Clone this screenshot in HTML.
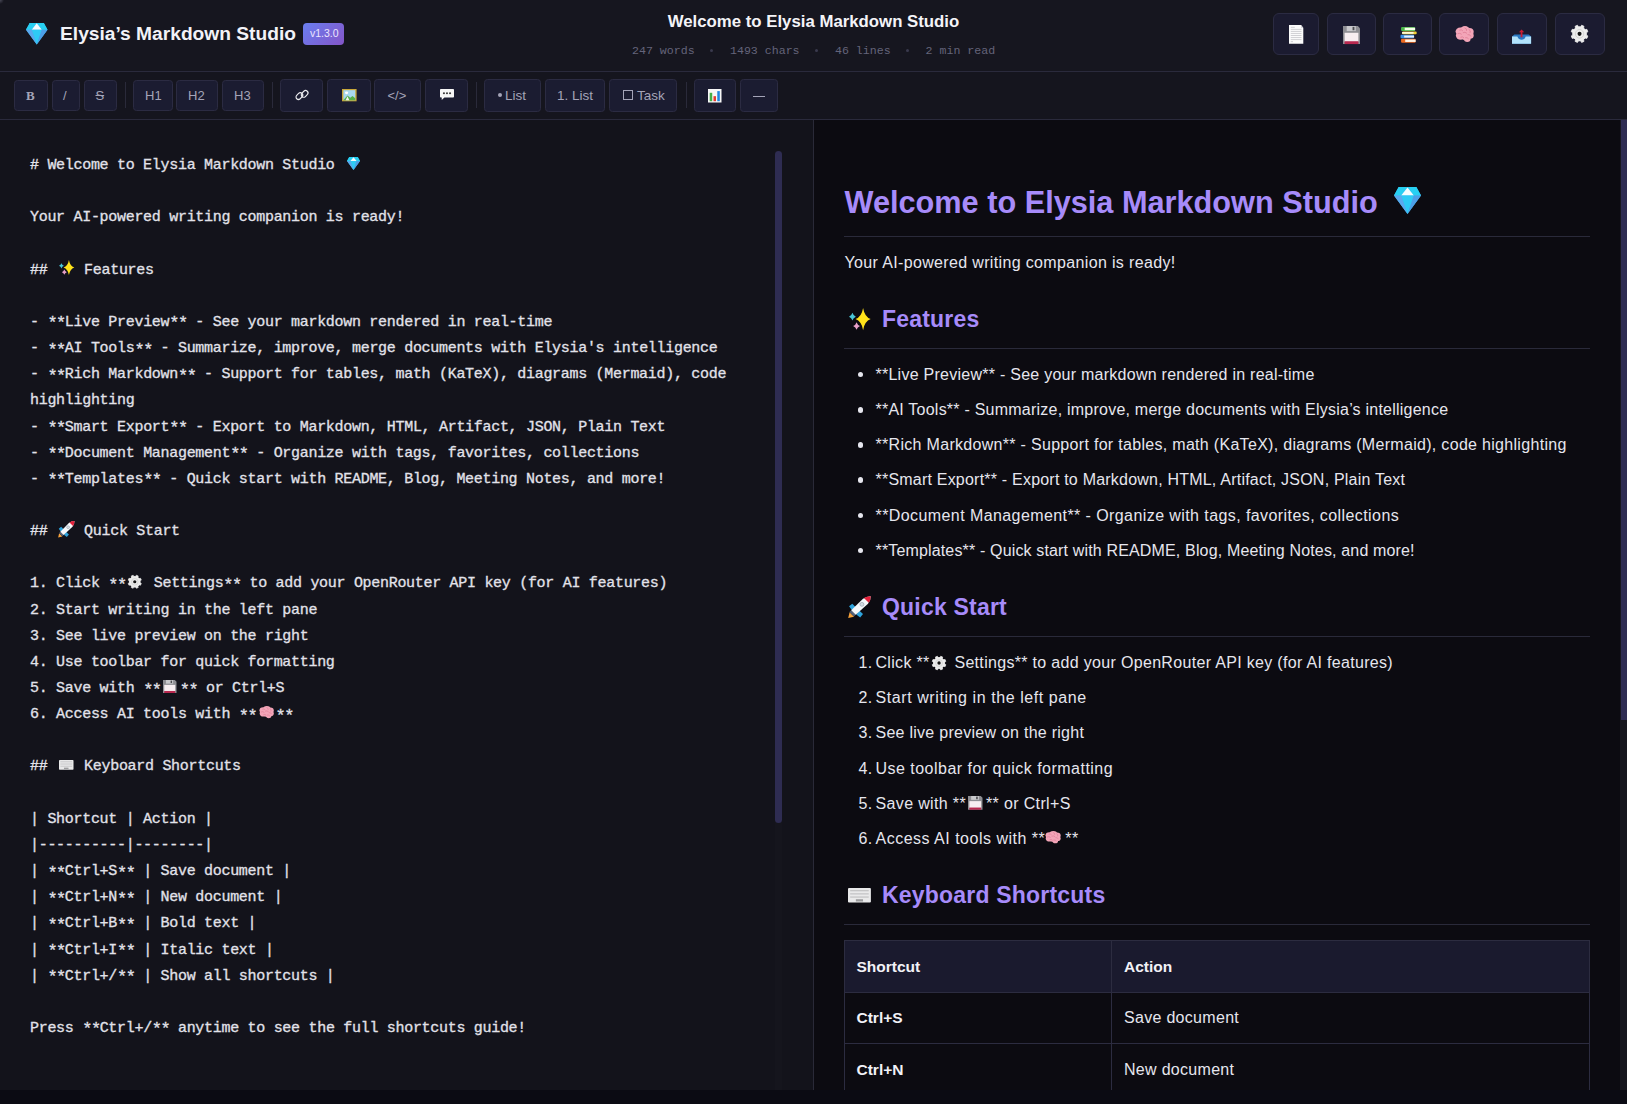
<!DOCTYPE html>
<html><head><meta charset="utf-8"><style>
*{box-sizing:border-box;margin:0;padding:0}
html,body{width:1627px;height:1104px;overflow:hidden;background:#0b0b12;font-family:"Liberation Sans",sans-serif;position:relative}
.t{position:absolute;white-space:pre}
.ic{position:absolute;overflow:visible}
.bg{position:absolute}
.mono{font-family:"Liberation Mono",monospace}
.hb{position:absolute;top:13px;height:42px;background:#1b1b30;border:1px solid #2b2b42;border-radius:6px}
.btn{position:absolute;background:#1b1c31;border:1px solid #2b2b42;border-radius:3.5px}
.sep{position:absolute;top:82px;width:1px;height:26px;background:#2a2a3a}
.ed{color:#e2e2ea;letter-spacing:-0.3px;-webkit-text-stroke:0.3px #e2e2ea}
.ast{position:relative;top:2.5px;font-size:17px;letter-spacing:-1.5px;line-height:0}
.em{display:inline-block;width:19.3px}
.pv{color:#e6e6ee;letter-spacing:0.3px}
.h{color:#a78bfa;font-weight:bold}
.tbt{color:#a4a4b8}
</style></head><body>
<div class="bg" style="left:0;top:0;width:1627px;height:71px;background:#16161f"></div>
<div class="bg" style="left:0;top:0;width:4px;height:4px;background:radial-gradient(circle at 0 0,#4a4a58,rgba(22,22,31,0) 4px)"></div>
<div class="bg" style="left:0;top:71px;width:1627px;height:1px;background:#2a2a3c"></div>
<div class="bg" style="left:0;top:72px;width:1627px;height:47px;background:#15151e"></div>
<div class="bg" style="left:0;top:119px;width:1627px;height:1px;background:#2a2a3c"></div>
<div class="bg" style="left:0;top:120px;width:813px;height:970px;background:#13131b"></div>
<div class="bg" style="left:813px;top:120px;width:1px;height:970px;background:#2a2a38"></div>
<div class="bg" style="left:814px;top:120px;width:806px;height:970px;background:#0c0b11"></div>
<div class="bg" style="left:1620px;top:120px;width:7px;height:970px;background:#16161e"></div>
<div class="bg" style="left:1621px;top:120px;width:6px;height:600px;background:#2e2c52"></div>
<div class="bg" style="left:775px;top:151px;width:7px;height:939px;background:#15151d"></div>
<div class="bg" style="left:775px;top:151px;width:7px;height:672px;border-radius:3.5px;background:#2e2c52"></div>
<div class="bg" style="left:0;top:1090px;width:1627px;height:14px;background:#0b0b13"></div>
<svg class="ic" style="left:26px;top:23px;width:21.5px;height:21.5px;" viewBox="0 0 32 32" preserveAspectRatio="none"><path d="M5.5 0H26.5L32 10L16 32L0 10Z" fill="#3ab7f0"/>
<path d="M5.5 0H16L8.5 10H0Z" fill="#27d0f2"/><path d="M16 0H26.5L32 10H23.5Z" fill="#27d0f2"/>
<path d="M16 .5L8.5 10H23.5Z" fill="#f4fdff"/>
<path d="M8.5 10H23.5L16 32Z" fill="#2ecbf5"/>
<path d="M0 10H8.5L16 32Z" fill="#5aa9ee"/><path d="M23.5 10H32L16 32Z" fill="#4c9fe8"/></svg>
<div class="t " style="left:60px;top:21.87px;font-size:19.2px;line-height:24.96px;font-weight:bold;color:#f2f2f7">Elysia’s Markdown Studio</div>
<div class="bg" style="left:303px;top:23px;width:41px;height:22px;border-radius:4px;background:linear-gradient(135deg,#6a7ff0,#8455c8)"></div>
<div class="t " style="left:310px;top:26.54px;font-size:10.5px;line-height:13.65px;color:#ece6ff">v1.3.0</div>
<div class="t" style="left:0;width:1627px;text-align:center;top:12px;font-size:16.8px;line-height:20px;font-weight:bold;color:#f4f4f8">Welcome to Elysia Markdown Studio</div>
<div class="t mono" style="left:632px;top:43.37px;font-size:11.6px;line-height:15.08px;color:#64647a">247 words</div>
<div class="t mono" style="left:730px;top:43.37px;font-size:11.6px;line-height:15.08px;color:#64647a">1493 chars</div>
<div class="t mono" style="left:835px;top:43.37px;font-size:11.6px;line-height:15.08px;color:#64647a">46 lines</div>
<div class="t mono" style="left:925.6px;top:43.37px;font-size:11.6px;line-height:15.08px;color:#64647a">2 min read</div>
<div class="bg" style="left:710.2px;top:48.5px;width:3px;height:3px;border-radius:50%;background:#3a3a4e"></div>
<div class="bg" style="left:814.8px;top:48.5px;width:3px;height:3px;border-radius:50%;background:#3a3a4e"></div>
<div class="bg" style="left:906.1px;top:48.5px;width:3px;height:3px;border-radius:50%;background:#3a3a4e"></div>
<div class="hb" style="left:1273px;width:46px"></div>
<svg class="ic" style="left:1288.8px;top:24.9px;width:14.3px;height:18.7px;" viewBox="0 0 32 32" preserveAspectRatio="none"><path d="M0 0H27L32 5V32H0Z" fill="#fbfbfb"/><path d="M27 0V5H32Z" fill="#d5d5d8"/>
<g stroke="#a0a0a6" stroke-width="0.9"><path d="M4 4H13M4 7.5H28M4 11H28M4 14.5H28M4 18H28M4 21.5H28M4 25H28M4 28.5H9"/></g></svg>
<div class="hb" style="left:1327px;width:49px"></div>
<svg class="ic" style="left:1343px;top:25.9px;width:17px;height:18.1px;" viewBox="0 0 32 32" preserveAspectRatio="none"><path d="M0 0H28L32 4V32H0Z" fill="#8e8e93"/><rect x="7" y="0" width="17" height="9" fill="#c9c9cc"/><rect x="18" y="1.5" width="3.5" height="6" fill="#4a4a4e"/>
<rect x="3" y="12" width="26" height="16" fill="#f7eef1"/><rect x="3" y="27" width="26" height="5" fill="#b8284f"/></svg>
<div class="hb" style="left:1383px;width:49px"></div>
<svg class="ic" style="left:1399.5px;top:27.4px;width:16.7px;height:15.7px;" viewBox="0 0 32 32" preserveAspectRatio="none"><rect x="2" y="24" width="28" height="8" rx="2" fill="#ef6a1f"/><rect x="10" y="25.5" width="20" height="5" fill="#fff5e6"/>
<rect x="1" y="16" width="26" height="7" rx="2" fill="#3b8fe3"/><rect x="8" y="17.5" width="19" height="4" fill="#eaf3ff"/>
<rect x="4" y="9" width="28" height="6" rx="2" fill="#f4d236"/><rect x="4" y="10.3" width="22" height="3.4" fill="#fffbe0"/>
<rect x="2" y="0" width="27" height="8" rx="2" fill="#4bb74a"/><rect x="9" y="1.5" width="20" height="5" fill="#f6ffe8"/></svg>
<div class="hb" style="left:1439px;width:50px"></div>
<svg class="ic" style="left:1454.8px;top:26.4px;width:18.7px;height:16.2px;" viewBox="0 0 32 32" preserveAspectRatio="none"><g fill="#f3a5b8"><circle cx="9" cy="11" r="8"/><circle cx="17" cy="8" r="8"/><circle cx="24.5" cy="11.5" r="7.5"/><circle cx="25.5" cy="19" r="6.5"/><circle cx="18" cy="20" r="8"/><circle cx="9.5" cy="19" r="8"/><circle cx="21" cy="26" r="5.5"/></g>
<path d="M8 8Q11 6 13 9M17 4Q21 5 20 9M24 7Q28 9 26 13M5 15Q8 13 11 16M14 13Q17 11 20 14M22 17Q26 16 27 20M10 22Q13 20 15 23M18 23Q21 22 23 25" stroke="#de7d96" stroke-width="1.5" fill="none" stroke-linecap="round"/></svg>
<div class="hb" style="left:1497px;width:50px"></div>
<svg class="ic" style="left:1512.4px;top:28.8px;width:19.1px;height:14.8px;" viewBox="0 0 32 32" preserveAspectRatio="none"><path d="M0 16L4 12H28L32 16V32H0Z" fill="#2a78c2"/><path d="M0 16H9Q11 23 16 23Q21 23 23 16H32V32H0Z" fill="#b2e2fa"/>
<path d="M16 1L11.5 7H14.5V18H17.5V7H20.5Z" fill="#c81e32"/></svg>
<div class="hb" style="left:1555px;width:50px"></div>
<svg class="ic" style="left:1570.9px;top:25.4px;width:17.1px;height:17.7px;" viewBox="0 0 32 32" preserveAspectRatio="none"><path d="M18.00 3.36 L19.86 0.47 L24.25 2.29 L23.52 5.64 L26.36 8.48 L29.71 7.75 L31.53 12.14 L28.64 14.00 L28.64 18.00 L31.53 19.86 L29.71 24.25 L26.36 23.52 L23.52 26.36 L24.25 29.71 L19.86 31.53 L18.00 28.64 L14.00 28.64 L12.14 31.53 L7.75 29.71 L8.48 26.36 L5.64 23.52 L2.29 24.25 L0.47 19.86 L3.36 18.00 L3.36 14.00 L0.47 12.14 L2.29 7.75 L5.64 8.48 L8.48 5.64 L7.75 2.29 L12.14 0.47 L14.00 3.36Z" fill="#ececec" stroke="#ececec" stroke-width="1.5" stroke-linejoin="round"/><circle cx="16" cy="16" r="13" fill="#ececec"/>
<circle cx="16" cy="16" r="7.8" fill="none" stroke="#c8c8c8" stroke-width="1.3"/><circle cx="16" cy="16" r="3.8" fill="#151515"/></svg>
<div class="btn" style="left:14px;top:80px;width:34px;height:31px"></div>
<div class="btn" style="left:52px;top:80px;width:28px;height:31px"></div>
<div class="btn" style="left:84px;top:80px;width:33px;height:31px"></div>
<div class="sep" style="left:125px"></div>
<div class="btn" style="left:133px;top:80px;width:40px;height:31px"></div>
<div class="btn" style="left:176px;top:80px;width:42px;height:31px"></div>
<div class="btn" style="left:222px;top:80px;width:42px;height:31px"></div>
<div class="sep" style="left:272px"></div>
<div class="btn" style="left:280px;top:79px;width:43px;height:33px"></div>
<div class="btn" style="left:327px;top:79px;width:44px;height:33px"></div>
<div class="btn" style="left:374px;top:79px;width:47px;height:33px"></div>
<div class="btn" style="left:425px;top:79px;width:43px;height:33px"></div>
<div class="sep" style="left:476px"></div>
<div class="btn" style="left:484px;top:79px;width:57px;height:33px"></div>
<div class="btn" style="left:545px;top:79px;width:60px;height:33px"></div>
<div class="btn" style="left:609px;top:79px;width:68px;height:33px"></div>
<div class="sep" style="left:686px"></div>
<div class="btn" style="left:694px;top:79px;width:42px;height:33px"></div>
<div class="btn" style="left:740px;top:79px;width:38px;height:33px"></div>
<div class="t tbt" style="left:26px;top:87.55px;font-size:13px;line-height:16.9px;font-family:'Liberation Serif',serif;font-weight:bold">B</div>
<div class="t tbt" style="left:63px;top:87.55px;font-size:13px;line-height:16.9px;">/</div>
<div class="t tbt" style="left:95.5px;top:87.55px;font-size:13px;line-height:16.9px;text-decoration:line-through">S</div>
<div class="t tbt" style="left:145px;top:87.55px;font-size:13px;line-height:16.9px;">H1</div>
<div class="t tbt" style="left:188px;top:87.55px;font-size:13px;line-height:16.9px;">H2</div>
<div class="t tbt" style="left:234px;top:87.55px;font-size:13px;line-height:16.9px;">H3</div>
<svg class="ic" style="left:294.6px;top:88.2px;width:14px;height:14px;" viewBox="0 0 32 32" preserveAspectRatio="none"><g fill="none" stroke="#ededf0" stroke-width="2.6"><rect x="1.5" y="13" width="17" height="11" rx="5.5" transform="rotate(-45 10 18.5)"/><rect x="13.5" y="8" width="17" height="11" rx="5.5" transform="rotate(-45 22 13.5)"/></g></svg>
<svg class="ic" style="left:341.9px;top:89.3px;width:14.6px;height:12.3px;" viewBox="0 0 32 32" preserveAspectRatio="none"><rect x="0" y="0" width="32" height="32" fill="#c9a83a"/><rect x="3" y="3" width="26" height="26" fill="#a8d8f0"/>
<path d="M3 29L12 17L18 23L23 18L29 24V29Z" fill="#55b04a"/><circle cx="10" cy="10" r="3.5" fill="#fff"/><path d="M8 29L12 19L16 29Z" fill="#f3f3f3"/></svg>
<div class="t tbt" style="left:387.5px;top:87.55px;font-size:13px;line-height:16.9px;">&lt;/&gt;</div>
<svg class="ic" style="left:439.5px;top:89.3px;width:14px;height:12.5px;" viewBox="0 0 32 32" preserveAspectRatio="none"><path d="M2 0H30Q32 0 32 2V20Q32 22 30 22H10L4 28V22H2Q0 22 0 20V2Q0 0 2 0Z" fill="#f6f6f6"/>
<circle cx="9" cy="11" r="2.4" fill="#3a3a3a"/><circle cx="16" cy="11" r="2.4" fill="#3a3a3a"/><circle cx="23" cy="11" r="2.4" fill="#3a3a3a"/></svg>
<div class="bg" style="left:497.5px;top:93px;width:4px;height:4px;border-radius:2px;background:#a4a4b8"></div>
<div class="t tbt" style="left:505px;top:87.05px;font-size:13.5px;line-height:17.55px;">List</div>
<div class="t tbt" style="left:557px;top:87.05px;font-size:13.5px;line-height:17.55px;">1. List</div>
<div class="bg" style="left:623px;top:90px;width:9.5px;height:10px;border:1.3px solid #a4a4b8"></div>
<div class="t tbt" style="left:637px;top:87.05px;font-size:13.5px;line-height:17.55px;">Task</div>
<svg class="ic" style="left:708px;top:88.9px;width:13.5px;height:13.5px;" viewBox="0 0 32 32" preserveAspectRatio="none"><rect x="0" y="0" width="32" height="32" fill="#f7f7f7"/><rect x="4" y="9" width="6" height="20" fill="#43b047"/><rect x="13" y="17" width="6" height="12" fill="#e53b30"/><rect x="22" y="5" width="6" height="24" fill="#1f86e0"/></svg>
<div class="bg" style="left:753px;top:96px;width:12px;height:1.2px;background:#a4a4b8"></div>
<div class="t mono ed" style="left:30px;top:153.00px;font-size:15px;line-height:26px;"># Welcome to Elysia Markdown Studio <span class="em"></span></div>
<div class="t mono ed" style="left:30px;top:205.30px;font-size:15px;line-height:26px;">Your AI-powered writing companion is ready!</div>
<div class="t mono ed" style="left:30px;top:257.60px;font-size:15px;line-height:26px;">## <span class="em"></span> Features</div>
<div class="t mono ed" style="left:30px;top:309.90px;font-size:15px;line-height:26px;">- <span class="ast">**</span>Live Preview<span class="ast">**</span> - See your markdown rendered in real-time</div>
<div class="t mono ed" style="left:30px;top:336.05px;font-size:15px;line-height:26px;">- <span class="ast">**</span>AI Tools<span class="ast">**</span> - Summarize, improve, merge documents with Elysia's intelligence</div>
<div class="t mono ed" style="left:30px;top:362.20px;font-size:15px;line-height:26px;">- <span class="ast">**</span>Rich Markdown<span class="ast">**</span> - Support for tables, math (KaTeX), diagrams (Mermaid), code</div>
<div class="t mono ed" style="left:30px;top:388.35px;font-size:15px;line-height:26px;">highlighting</div>
<div class="t mono ed" style="left:30px;top:414.50px;font-size:15px;line-height:26px;">- <span class="ast">**</span>Smart Export<span class="ast">**</span> - Export to Markdown, HTML, Artifact, JSON, Plain Text</div>
<div class="t mono ed" style="left:30px;top:440.65px;font-size:15px;line-height:26px;">- <span class="ast">**</span>Document Management<span class="ast">**</span> - Organize with tags, favorites, collections</div>
<div class="t mono ed" style="left:30px;top:466.80px;font-size:15px;line-height:26px;">- <span class="ast">**</span>Templates<span class="ast">**</span> - Quick start with README, Blog, Meeting Notes, and more!</div>
<div class="t mono ed" style="left:30px;top:519.10px;font-size:15px;line-height:26px;">## <span class="em"></span> Quick Start</div>
<div class="t mono ed" style="left:30px;top:571.40px;font-size:15px;line-height:26px;">1. Click <span class="ast">**</span><span class="em"></span> Settings<span class="ast">**</span> to add your OpenRouter API key (for AI features)</div>
<div class="t mono ed" style="left:30px;top:597.55px;font-size:15px;line-height:26px;">2. Start writing in the left pane</div>
<div class="t mono ed" style="left:30px;top:623.70px;font-size:15px;line-height:26px;">3. See live preview on the right</div>
<div class="t mono ed" style="left:30px;top:649.85px;font-size:15px;line-height:26px;">4. Use toolbar for quick formatting</div>
<div class="t mono ed" style="left:30px;top:676.00px;font-size:15px;line-height:26px;">5. Save with <span class="ast">**</span><span class="em"></span><span class="ast">**</span> or Ctrl+S</div>
<div class="t mono ed" style="left:30px;top:702.15px;font-size:15px;line-height:26px;">6. Access AI tools with <span class="ast">**</span><span class="em"></span><span class="ast">**</span></div>
<div class="t mono ed" style="left:30px;top:754.45px;font-size:15px;line-height:26px;">## <span class="em"></span> Keyboard Shortcuts</div>
<div class="t mono ed" style="left:30px;top:806.75px;font-size:15px;line-height:26px;">| Shortcut | Action |</div>
<div class="t mono ed" style="left:30px;top:832.90px;font-size:15px;line-height:26px;">|----------|--------|</div>
<div class="t mono ed" style="left:30px;top:859.05px;font-size:15px;line-height:26px;">| <span class="ast">**</span>Ctrl+S<span class="ast">**</span> | Save document |</div>
<div class="t mono ed" style="left:30px;top:885.20px;font-size:15px;line-height:26px;">| <span class="ast">**</span>Ctrl+N<span class="ast">**</span> | New document |</div>
<div class="t mono ed" style="left:30px;top:911.35px;font-size:15px;line-height:26px;">| <span class="ast">**</span>Ctrl+B<span class="ast">**</span> | Bold text |</div>
<div class="t mono ed" style="left:30px;top:937.50px;font-size:15px;line-height:26px;">| <span class="ast">**</span>Ctrl+I<span class="ast">**</span> | Italic text |</div>
<div class="t mono ed" style="left:30px;top:963.65px;font-size:15px;line-height:26px;">| <span class="ast">**</span>Ctrl+/<span class="ast">**</span> | Show all shortcuts |</div>
<div class="t mono ed" style="left:30px;top:1015.95px;font-size:15px;line-height:26px;">Press <span class="ast">**</span>Ctrl+/<span class="ast">**</span> anytime to see the full shortcuts guide!</div>
<svg class="ic" style="left:347px;top:157px;width:13px;height:13px;" viewBox="0 0 32 32" preserveAspectRatio="none"><path d="M5.5 0H26.5L32 10L16 32L0 10Z" fill="#3ab7f0"/>
<path d="M5.5 0H16L8.5 10H0Z" fill="#27d0f2"/><path d="M16 0H26.5L32 10H23.5Z" fill="#27d0f2"/>
<path d="M16 .5L8.5 10H23.5Z" fill="#f4fdff"/>
<path d="M8.5 10H23.5L16 32Z" fill="#2ecbf5"/>
<path d="M0 10H8.5L16 32Z" fill="#5aa9ee"/><path d="M23.5 10H32L16 32Z" fill="#4c9fe8"/></svg>
<svg class="ic" style="left:58.5px;top:260px;width:15.5px;height:15px;" viewBox="0 0 32 32" preserveAspectRatio="none"><path d="M20.5 0 Q22.7 12.8 31.5 16 Q22.7 19.2 20.5 32 Q18.3 19.2 9.5 16 Q18.3 12.8 20.5 0Z" fill="#ffe21a"/><path d="M5 7.0 Q6.25 11.125 10 12.5 Q6.25 13.875 5 18.0 Q3.75 13.875 0 12.5 Q3.75 11.125 5 7.0Z" fill="#49c6d8"/><path d="M11 20.5 Q12.25 24.625 16 26 Q12.25 27.375 11 31.5 Q9.75 27.375 6 26 Q9.75 24.625 11 20.5Z" fill="#e8a0c8"/></svg>
<svg class="ic" style="left:57.6px;top:520.5px;width:16.6px;height:16.6px;" viewBox="0 0 32 32" preserveAspectRatio="none"><path d="M0.3 31.7L2.2 23.5L8.5 29.8Z" fill="#f7a23b"/>
<path d="M1.5 14.8L6 11L11 16L5.5 20.5Z" fill="#2ea3dc"/><path d="M11.5 26.5L16 21L21 26L17 31Z" fill="#2ea3dc"/>
<path d="M4.5 20.5L10.8 26.8L8.3 29.3L2 23Z" fill="#55627a"/>
<path d="M4.5 20.5L21 4Q26.5 0 31.8 0.2Q32 5.5 28 11L10.8 26.8Z" fill="#f6f8fb"/>
<path d="M22.2 3Q26.5 0 31.8 0.2Q32 5.5 29 9.8Z" fill="#e3203a"/>
<circle cx="19.5" cy="12" r="2.8" fill="#d5dbe2" stroke="#9aa4b0" stroke-width="1"/></svg>
<svg class="ic" style="left:128.3px;top:574.8px;width:13.5px;height:13.5px;" viewBox="0 0 32 32" preserveAspectRatio="none"><path d="M18.00 3.36 L19.86 0.47 L24.25 2.29 L23.52 5.64 L26.36 8.48 L29.71 7.75 L31.53 12.14 L28.64 14.00 L28.64 18.00 L31.53 19.86 L29.71 24.25 L26.36 23.52 L23.52 26.36 L24.25 29.71 L19.86 31.53 L18.00 28.64 L14.00 28.64 L12.14 31.53 L7.75 29.71 L8.48 26.36 L5.64 23.52 L2.29 24.25 L0.47 19.86 L3.36 18.00 L3.36 14.00 L0.47 12.14 L2.29 7.75 L5.64 8.48 L8.48 5.64 L7.75 2.29 L12.14 0.47 L14.00 3.36Z" fill="#ececec" stroke="#ececec" stroke-width="1.5" stroke-linejoin="round"/><circle cx="16" cy="16" r="13" fill="#ececec"/>
<circle cx="16" cy="16" r="7.8" fill="none" stroke="#c8c8c8" stroke-width="1.3"/><circle cx="16" cy="16" r="3.8" fill="#151515"/></svg>
<svg class="ic" style="left:163px;top:680.4px;width:13.5px;height:13px;" viewBox="0 0 32 32" preserveAspectRatio="none"><path d="M0 0H28L32 4V32H0Z" fill="#8e8e93"/><rect x="7" y="0" width="17" height="9" fill="#c9c9cc"/><rect x="18" y="1.5" width="3.5" height="6" fill="#4a4a4e"/>
<rect x="3" y="12" width="26" height="16" fill="#f7eef1"/><rect x="3" y="27" width="26" height="5" fill="#b8284f"/></svg>
<svg class="ic" style="left:258.7px;top:706.3px;width:14.8px;height:12.5px;" viewBox="0 0 32 32" preserveAspectRatio="none"><g fill="#f3a5b8"><circle cx="9" cy="11" r="8"/><circle cx="17" cy="8" r="8"/><circle cx="24.5" cy="11.5" r="7.5"/><circle cx="25.5" cy="19" r="6.5"/><circle cx="18" cy="20" r="8"/><circle cx="9.5" cy="19" r="8"/><circle cx="21" cy="26" r="5.5"/></g>
<path d="M8 8Q11 6 13 9M17 4Q21 5 20 9M24 7Q28 9 26 13M5 15Q8 13 11 16M14 13Q17 11 20 14M22 17Q26 16 27 20M10 22Q13 20 15 23M18 23Q21 22 23 25" stroke="#de7d96" stroke-width="1.5" fill="none" stroke-linecap="round"/></svg>
<svg class="ic" style="left:58.6px;top:760px;width:14.5px;height:9.8px;" viewBox="0 0 32 32" preserveAspectRatio="none"><rect x="0" y="0" width="32" height="32" rx="1.5" fill="#e9e9ea"/>
<g fill="#b9b9bb"><rect x="3" y="5" width="26" height="2.2"/><rect x="3" y="12" width="26" height="2.2"/><rect x="3" y="19" width="26" height="2.2"/><rect x="11" y="25" width="10" height="5" fill="#9c9c9e"/></g></svg>
<div class="t h" style="left:844.5px;top:182.91px;font-size:30.7px;line-height:39.91px;">Welcome to Elysia Markdown Studio</div>
<svg class="ic" style="left:1394px;top:187px;width:27px;height:27px;" viewBox="0 0 32 32" preserveAspectRatio="none"><path d="M5.5 0H26.5L32 10L16 32L0 10Z" fill="#3ab7f0"/>
<path d="M5.5 0H16L8.5 10H0Z" fill="#27d0f2"/><path d="M16 0H26.5L32 10H23.5Z" fill="#27d0f2"/>
<path d="M16 .5L8.5 10H23.5Z" fill="#f4fdff"/>
<path d="M8.5 10H23.5L16 32Z" fill="#2ecbf5"/>
<path d="M0 10H8.5L16 32Z" fill="#5aa9ee"/><path d="M23.5 10H32L16 32Z" fill="#4c9fe8"/></svg>
<div class="bg" style="left:844px;top:236px;width:746px;height:1px;background:#2a2a3a"></div>
<div class="t pv" style="left:844.5px;top:252.76px;font-size:16px;line-height:20.8px;letter-spacing:0.35px">Your AI-powered writing companion is ready!</div>
<svg class="ic" style="left:849px;top:307.8px;width:22px;height:22.2px;" viewBox="0 0 32 32" preserveAspectRatio="none"><path d="M20.5 0 Q22.7 12.8 31.5 16 Q22.7 19.2 20.5 32 Q18.3 19.2 9.5 16 Q18.3 12.8 20.5 0Z" fill="#ffe21a"/><path d="M5 7.0 Q6.25 11.125 10 12.5 Q6.25 13.875 5 18.0 Q3.75 13.875 0 12.5 Q3.75 11.125 5 7.0Z" fill="#49c6d8"/><path d="M11 20.5 Q12.25 24.625 16 26 Q12.25 27.375 11 31.5 Q9.75 27.375 6 26 Q9.75 24.625 11 20.5Z" fill="#e8a0c8"/></svg>
<div class="t h" style="left:882px;top:304.98px;font-size:23px;line-height:29.9px;letter-spacing:0.2px">Features</div>
<div class="bg" style="left:844px;top:348px;width:746px;height:1px;background:#2a2a3a"></div>
<div class="bg" style="left:857.7px;top:371.80px;width:5.6px;height:5.6px;border-radius:50%;background:#e6e6ee"></div>
<div class="t pv" style="left:875.5px;top:364.86px;font-size:16px;line-height:20.8px;letter-spacing:0.257px">**Live Preview** - See your markdown rendered in real-time</div>
<div class="bg" style="left:857.7px;top:407.00px;width:5.6px;height:5.6px;border-radius:50%;background:#e6e6ee"></div>
<div class="t pv" style="left:875.5px;top:400.06px;font-size:16px;line-height:20.8px;letter-spacing:0.229px">**AI Tools** - Summarize, improve, merge documents with Elysia’s intelligence</div>
<div class="bg" style="left:857.7px;top:442.20px;width:5.6px;height:5.6px;border-radius:50%;background:#e6e6ee"></div>
<div class="t pv" style="left:875.5px;top:435.26px;font-size:16px;line-height:20.8px;letter-spacing:0.305px">**Rich Markdown** - Support for tables, math (KaTeX), diagrams (Mermaid), code highlighting</div>
<div class="bg" style="left:857.7px;top:477.40px;width:5.6px;height:5.6px;border-radius:50%;background:#e6e6ee"></div>
<div class="t pv" style="left:875.5px;top:470.46px;font-size:16px;line-height:20.8px;letter-spacing:0.213px">**Smart Export** - Export to Markdown, HTML, Artifact, JSON, Plain Text</div>
<div class="bg" style="left:857.7px;top:512.60px;width:5.6px;height:5.6px;border-radius:50%;background:#e6e6ee"></div>
<div class="t pv" style="left:875.5px;top:505.66px;font-size:16px;line-height:20.8px;letter-spacing:0.416px">**Document Management** - Organize with tags, favorites, collections</div>
<div class="bg" style="left:857.7px;top:547.80px;width:5.6px;height:5.6px;border-radius:50%;background:#e6e6ee"></div>
<div class="t pv" style="left:875.5px;top:540.86px;font-size:16px;line-height:20.8px;letter-spacing:0.155px">**Templates** - Quick start with README, Blog, Meeting Notes, and more!</div>
<svg class="ic" style="left:848.4px;top:595.7px;width:22.9px;height:22.3px;" viewBox="0 0 32 32" preserveAspectRatio="none"><path d="M0.3 31.7L2.2 23.5L8.5 29.8Z" fill="#f7a23b"/>
<path d="M1.5 14.8L6 11L11 16L5.5 20.5Z" fill="#2ea3dc"/><path d="M11.5 26.5L16 21L21 26L17 31Z" fill="#2ea3dc"/>
<path d="M4.5 20.5L10.8 26.8L8.3 29.3L2 23Z" fill="#55627a"/>
<path d="M4.5 20.5L21 4Q26.5 0 31.8 0.2Q32 5.5 28 11L10.8 26.8Z" fill="#f6f8fb"/>
<path d="M22.2 3Q26.5 0 31.8 0.2Q32 5.5 29 9.8Z" fill="#e3203a"/>
<circle cx="19.5" cy="12" r="2.8" fill="#d5dbe2" stroke="#9aa4b0" stroke-width="1"/></svg>
<div class="t h" style="left:882px;top:593.48px;font-size:23px;line-height:29.9px;letter-spacing:0.2px">Quick Start</div>
<div class="bg" style="left:844px;top:636px;width:746px;height:1px;background:#2a2a3a"></div>
<div class="t pv" style="left:858.5px;top:652.96px;font-size:16px;line-height:20.8px;">1.</div>
<div class="t pv" style="left:875.5px;top:652.96px;font-size:16px;line-height:20.8px;letter-spacing:0.319px">Click **<span style="display:inline-block;width:20px"></span> Settings** to add your OpenRouter API key (for AI features)</div>
<div class="t pv" style="left:858.5px;top:688.16px;font-size:16px;line-height:20.8px;">2.</div>
<div class="t pv" style="left:875.5px;top:688.16px;font-size:16px;line-height:20.8px;letter-spacing:0.580px">Start writing in the left pane</div>
<div class="t pv" style="left:858.5px;top:723.36px;font-size:16px;line-height:20.8px;">3.</div>
<div class="t pv" style="left:875.5px;top:723.36px;font-size:16px;line-height:20.8px;letter-spacing:0.262px">See live preview on the right</div>
<div class="t pv" style="left:858.5px;top:758.56px;font-size:16px;line-height:20.8px;">4.</div>
<div class="t pv" style="left:875.5px;top:758.56px;font-size:16px;line-height:20.8px;letter-spacing:0.478px">Use toolbar for quick formatting</div>
<div class="t pv" style="left:858.5px;top:793.76px;font-size:16px;line-height:20.8px;">5.</div>
<div class="t pv" style="left:875.5px;top:793.76px;font-size:16px;line-height:20.8px;letter-spacing:0.352px">Save with **<span style="display:inline-block;width:20px"></span>** or Ctrl+S</div>
<div class="t pv" style="left:858.5px;top:828.96px;font-size:16px;line-height:20.8px;">6.</div>
<div class="t pv" style="left:875.5px;top:828.96px;font-size:16px;line-height:20.8px;letter-spacing:0.497px">Access AI tools with **<span style="display:inline-block;width:20px"></span>**</div>
<svg class="ic" style="left:932.1px;top:655.6px;width:14.1px;height:14.1px;" viewBox="0 0 32 32" preserveAspectRatio="none"><path d="M18.00 3.36 L19.86 0.47 L24.25 2.29 L23.52 5.64 L26.36 8.48 L29.71 7.75 L31.53 12.14 L28.64 14.00 L28.64 18.00 L31.53 19.86 L29.71 24.25 L26.36 23.52 L23.52 26.36 L24.25 29.71 L19.86 31.53 L18.00 28.64 L14.00 28.64 L12.14 31.53 L7.75 29.71 L8.48 26.36 L5.64 23.52 L2.29 24.25 L0.47 19.86 L3.36 18.00 L3.36 14.00 L0.47 12.14 L2.29 7.75 L5.64 8.48 L8.48 5.64 L7.75 2.29 L12.14 0.47 L14.00 3.36Z" fill="#ececec" stroke="#ececec" stroke-width="1.5" stroke-linejoin="round"/><circle cx="16" cy="16" r="13" fill="#ececec"/>
<circle cx="16" cy="16" r="7.8" fill="none" stroke="#c8c8c8" stroke-width="1.3"/><circle cx="16" cy="16" r="3.8" fill="#151515"/></svg>
<svg class="ic" style="left:968.1px;top:796px;width:14.5px;height:13.7px;" viewBox="0 0 32 32" preserveAspectRatio="none"><path d="M0 0H28L32 4V32H0Z" fill="#8e8e93"/><rect x="7" y="0" width="17" height="9" fill="#c9c9cc"/><rect x="18" y="1.5" width="3.5" height="6" fill="#4a4a4e"/>
<rect x="3" y="12" width="26" height="16" fill="#f7eef1"/><rect x="3" y="27" width="26" height="5" fill="#b8284f"/></svg>
<svg class="ic" style="left:1045px;top:831px;width:15.7px;height:12.5px;" viewBox="0 0 32 32" preserveAspectRatio="none"><g fill="#f3a5b8"><circle cx="9" cy="11" r="8"/><circle cx="17" cy="8" r="8"/><circle cx="24.5" cy="11.5" r="7.5"/><circle cx="25.5" cy="19" r="6.5"/><circle cx="18" cy="20" r="8"/><circle cx="9.5" cy="19" r="8"/><circle cx="21" cy="26" r="5.5"/></g>
<path d="M8 8Q11 6 13 9M17 4Q21 5 20 9M24 7Q28 9 26 13M5 15Q8 13 11 16M14 13Q17 11 20 14M22 17Q26 16 27 20M10 22Q13 20 15 23M18 23Q21 22 23 25" stroke="#de7d96" stroke-width="1.5" fill="none" stroke-linecap="round"/></svg>
<svg class="ic" style="left:848.2px;top:887.6px;width:22.9px;height:14.4px;" viewBox="0 0 32 32" preserveAspectRatio="none"><rect x="0" y="0" width="32" height="32" rx="1.5" fill="#e9e9ea"/>
<g fill="#b9b9bb"><rect x="3" y="5" width="26" height="2.2"/><rect x="3" y="12" width="26" height="2.2"/><rect x="3" y="19" width="26" height="2.2"/><rect x="11" y="25" width="10" height="5" fill="#9c9c9e"/></g></svg>
<div class="t h" style="left:882px;top:881.38px;font-size:23px;line-height:29.9px;letter-spacing:0.2px">Keyboard Shortcuts</div>
<div class="bg" style="left:844px;top:924px;width:746px;height:1px;background:#2a2a3a"></div>
<div class="bg" style="left:844px;top:940px;width:746px;height:52px;background:#1a1a2e"></div>
<div class="bg" style="left:844px;top:940px;width:746px;height:1px;background:#2c2c40"></div>
<div class="bg" style="left:844px;top:992px;width:746px;height:1px;background:#2c2c40"></div>
<div class="bg" style="left:844px;top:1043px;width:746px;height:1px;background:#2c2c40"></div>
<div class="bg" style="left:844px;top:940px;width:1px;height:150px;background:#2c2c40"></div>
<div class="bg" style="left:1111px;top:940px;width:1px;height:150px;background:#2c2c40"></div>
<div class="bg" style="left:1589px;top:940px;width:1px;height:150px;background:#2c2c40"></div>
<div class="t " style="left:856.5px;top:956.95px;font-size:15.5px;line-height:20.15px;font-weight:bold;color:#f2f2f7">Shortcut</div>
<div class="t " style="left:1124px;top:956.95px;font-size:15.5px;line-height:20.15px;font-weight:bold;color:#f2f2f7">Action</div>
<div class="t " style="left:856.5px;top:1007.55px;font-size:15.5px;line-height:20.15px;font-weight:bold;color:#f2f2f7">Ctrl+S</div>
<div class="t pv" style="left:1124px;top:1008.06px;font-size:16px;line-height:20.8px;">Save document</div>
<div class="t " style="left:856.5px;top:1059.55px;font-size:15.5px;line-height:20.15px;font-weight:bold;color:#f2f2f7">Ctrl+N</div>
<div class="t pv" style="left:1124px;top:1060.06px;font-size:16px;line-height:20.8px;">New document</div>
<div class="bg" style="left:0;top:1090px;width:1627px;height:14px;background:#0b0b13"></div>
</body></html>
